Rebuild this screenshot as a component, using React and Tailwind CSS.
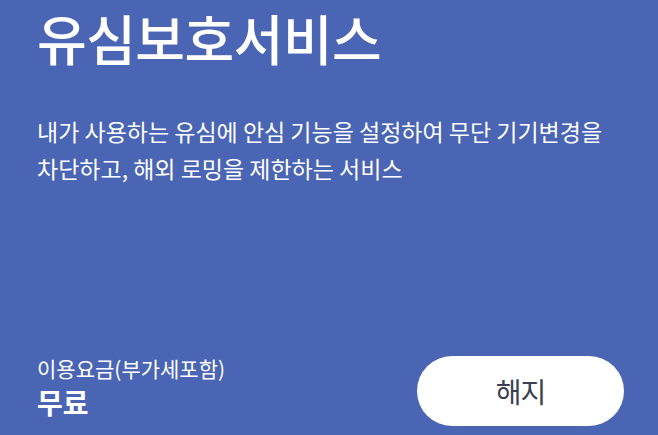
export default function App() {
  return (
    <div
      className="flex h-[435px] w-[658px] flex-col overflow-hidden bg-[#4a65b4] px-[37px] text-white"
      style={{ fontFamily: '"Noto Sans CJK KR", "Noto Sans", sans-serif' }}
    >
      <h1 className="text-[54px] font-medium leading-[76px] tracking-[-0.5px]">유심보호서비스</h1>
      <p className="mt-[37px] text-[23px] leading-[37px]">
        내가 사용하는 유심에 안심 기능을 설정하여 무단 기기변경을
        <br />
        차단하고, 해외 로밍을 제한하는 서비스
      </p>
      <div className="mt-auto mb-[9px] flex items-end justify-between">
        <div className="mb-[5px] flex flex-col">
          <span className="text-[21px] leading-[30px]">이용요금(부가세포함)</span>
          <span className="text-[28px] font-bold leading-[38px]">무료</span>
        </div>
        <button className="mr-[-3px] flex h-[70px] w-[207px] items-center justify-center rounded-full bg-white text-[28px] tracking-[-1px] text-[#3a4052]">
          해지
        </button>
      </div>
    </div>
  );
}
